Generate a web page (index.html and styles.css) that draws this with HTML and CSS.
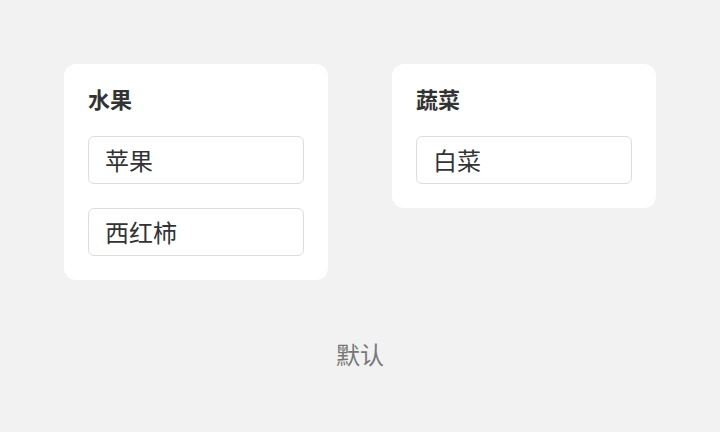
FILE: index.html
```html
<!DOCTYPE html>
<html lang="zh">
<head>
<meta charset="utf-8">
<link rel="stylesheet" href="styles.css">
</head>
<body>
  <div class="page">
    <div class="cards">
      <div class="card">
        <div class="card-title">水果</div>
        <div class="item">苹果</div>
        <div class="item">西红柿</div>
      </div>
      <div class="card">
        <div class="card-title">蔬菜</div>
        <div class="item">白菜</div>
      </div>
    </div>
    <div class="footer">默认</div>
  </div>
</body>
</html>
```

FILE: styles.css
```css
html, body {
  margin: 0;
  padding: 0;
}
body {
  width: 720px;
  height: 432px;
  overflow: hidden;
  background-color: #f2f2f2;
  background-image: conic-gradient(#efefef 25%, #f4f4f4 0 50%, #efefef 0 75%, #f4f4f4 0);
  background-size: 2px 2px;
  font-family: "Noto Sans CJK SC", "Noto Sans", sans-serif;
}
.page {
  padding: 64px 64px 0;
  display: flex;
  flex-direction: column;
}
.cards {
  display: flex;
  align-items: flex-start;
  gap: 64px;
}
.card {
  width: 264px;
  box-sizing: border-box;
  background: #ffffff;
  border-radius: 12px;
  padding: 24px;
  display: flex;
  flex-direction: column;
  gap: 24px;
}
.card-title {
  font-size: 22px;
  line-height: 20px;
  margin-bottom: 4px;
  font-weight: 700;
  color: #333333;
}
.item {
  height: 48px;
  box-sizing: border-box;
  border: 1px solid #dddddd;
  border-radius: 6px;
  padding: 0 16px 2px;
  display: flex;
  align-items: center;
  font-size: 24px;
  color: #333333;
}
.footer {
  margin-top: 59px;
  text-align: center;
  font-size: 24px;
  line-height: 30px;
  color: #777777;
}
```
